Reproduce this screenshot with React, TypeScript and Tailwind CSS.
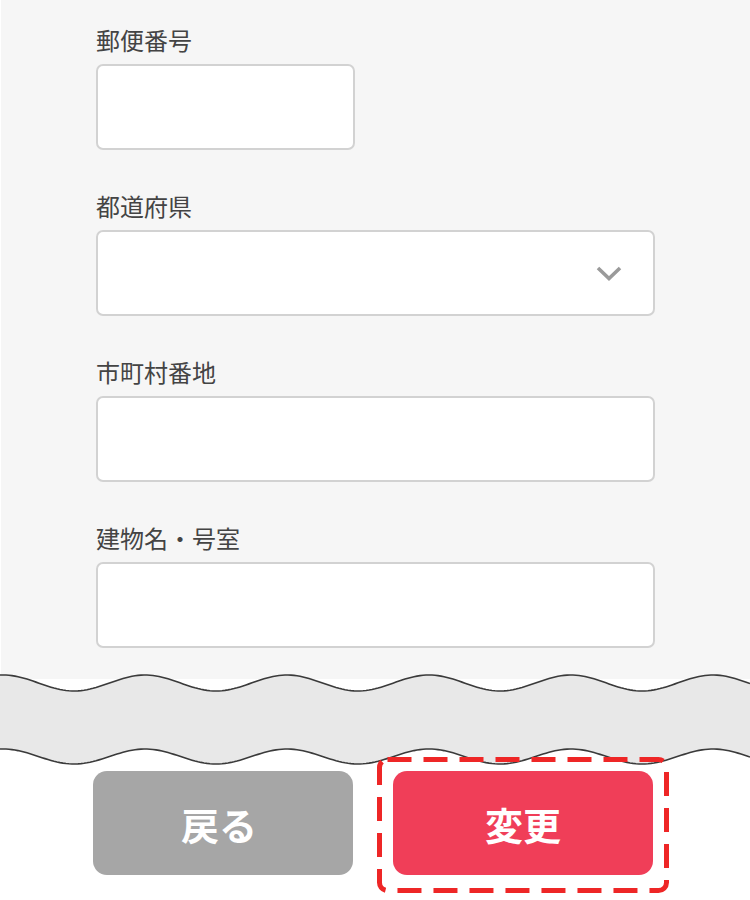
import React from "react";

function wavePoints(center: number, amp: number) {
  const pts: string[] = [];
  const period = 142;
  const crest = 145;
  for (let x = 0; x <= 750; x += 3) {
    const y = center - amp * Math.cos((2 * Math.PI * (x - crest)) / period);
    pts.push(`${x},${y.toFixed(2)}`);
  }
  return pts;
}

function Wave() {
  const top = wavePoints(15, 8);
  const bottom = wavePoints(88.5, 7.5);
  const fill = [...top, ...[...bottom].reverse()].join(" ");
  return (
    <svg width="750" height="99" viewBox="0 0 750 99" className="block -mt-[11px]">
      <polygon points={fill} fill="#e8e8e8" />
      <polyline points={top.join(" ")} fill="none" stroke="#3a3a3a" strokeWidth="1.6" />
      <polyline points={bottom.join(" ")} fill="none" stroke="#3a3a3a" strokeWidth="1.6" />
    </svg>
  );
}

function Label({ children }: { children: React.ReactNode }) {
  return (
    <div className="h-[32px] leading-[29px] text-[24px] text-[#444] mb-[7px]">{children}</div>
  );
}

const inputCls = "h-[86px] bg-white border-2 border-[#d2d2d2] rounded-[7px]";

export default function App() {
  return (
    <div
      className="w-[750px] h-[900px] bg-white overflow-hidden"
      style={{ fontFamily: '"Noto Sans CJK JP", "Noto Sans", sans-serif' }}
    >
      <div className="ml-px h-[679px] bg-[#f6f6f6] pt-[25px] pl-[95px] pr-[95px] flex flex-col gap-[41px]">
        <div>
          <Label>郵便番号</Label>
          <div className={`${inputCls} w-[259px]`} />
        </div>
        <div>
          <Label>都道府県</Label>
          <div className={`${inputCls} w-[559px] flex items-center justify-end pr-[31px]`}>
            <svg width="26" height="16" viewBox="0 0 26 16">
              <polyline
                points="2,3 13,13.5 24,3"
                fill="none"
                stroke="#9a9a9a"
                strokeWidth="3.6"
              />
            </svg>
          </div>
        </div>
        <div>
          <Label>市町村番地</Label>
          <div className={`${inputCls} w-[559px]`} />
        </div>
        <div>
          <Label>建物名・号室</Label>
          <div className={`${inputCls} w-[559px]`} />
        </div>
      </div>
      <Wave />
      <div className="mt-[4px] pl-[93px] flex gap-[40px]">
        <button className="w-[260px] h-[104px] rounded-[14px] bg-[#a6a6a6] text-white font-bold text-[38px] flex items-center justify-center pr-[8px]">
          戻る
        </button>
        <div className="relative">
          <button className="w-[260px] h-[104px] rounded-[14px] bg-[#f03e58] text-white font-bold text-[38px] flex items-center justify-center">
            変更
          </button>
          <svg
            width="292"
            height="136"
            viewBox="0 0 292 136"
            className="absolute -left-[16px] -top-[14px] pointer-events-none"
          >
            <rect
              x="2.5"
              y="2.5"
              width="287"
              height="131"
              rx="8"
              fill="none"
              stroke="#ee2626"
              strokeWidth="5"
              strokeDasharray="24 12"
            />
          </svg>
        </div>
      </div>
    </div>
  );
}
